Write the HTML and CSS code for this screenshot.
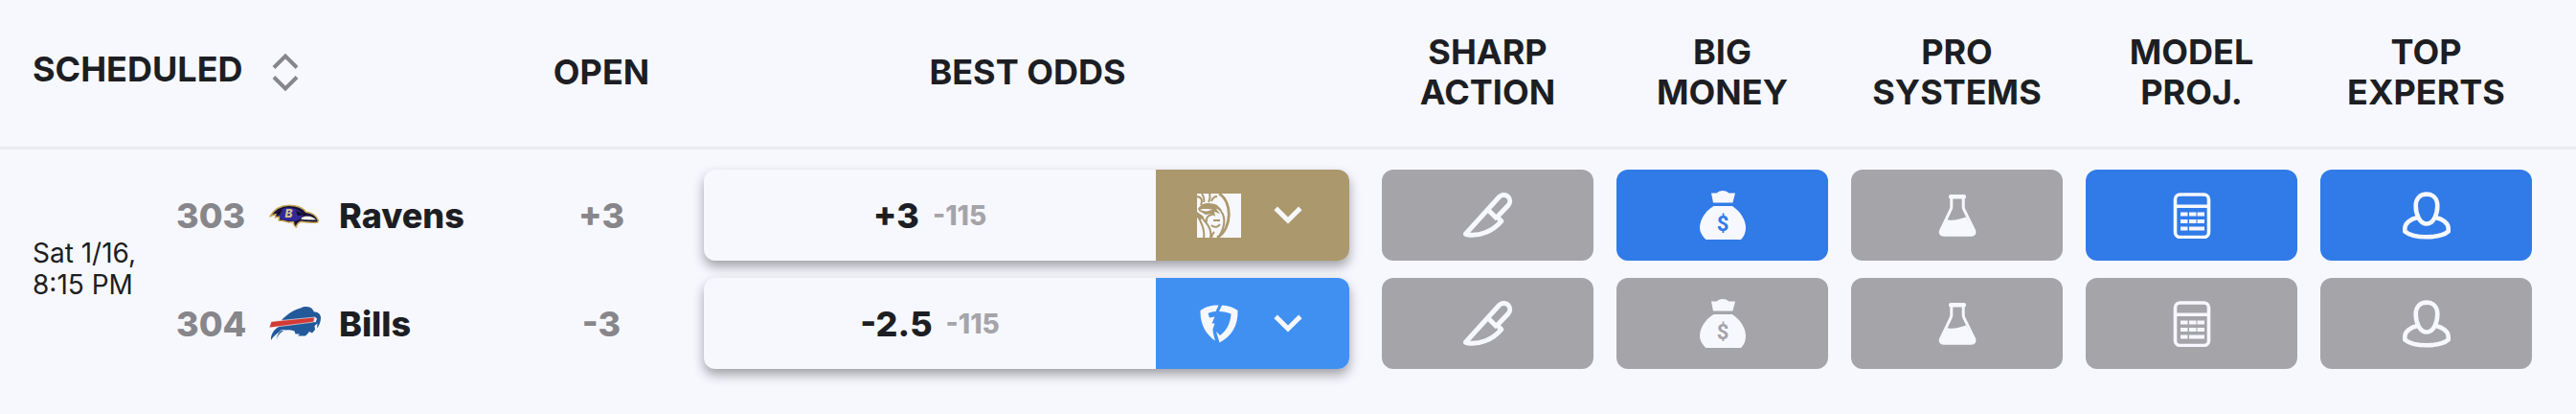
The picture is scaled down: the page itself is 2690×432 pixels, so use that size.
FILE: index.html
```html
<!DOCTYPE html>
<html lang="en">
<head>
    <meta charset="UTF-8">
    <meta name="viewport" content="width=device-width, initial-scale=1.0">
    <title>NFL Odds</title>
    <link rel="stylesheet" href="styles.css">
</head>
<body>
    <!-- icons shared by both rows -->
    <svg class="icon-defs" aria-hidden="true">
        <symbol id="icon-chevron" viewBox="0 0 30 20">
            <path d="M2.2 2.4 15 15l12.8-12.6" fill="none" stroke="currentColor" stroke-width="5"/>
        </symbol>
        <symbol id="icon-knife" viewBox="0 0 54 48">
            <g fill="none" stroke="currentColor" stroke-width="5" stroke-linejoin="round">
                <path d="M4 42.500 38.500 4.500c3-3 7-2.500 9.300-.2 2.500 2.500 2.600 6.400 0 9.200L36.500 25.200l4.200 4.600C32 40 18 46 5 43.800c-1.500-.3-2-.6-1-1.300z"/>
                <path d="M26.500 17.500 36.500 27.500"/>
            </g>
        </symbol>
        <symbol id="icon-money" viewBox="0 0 50 52">
            <path d="M13 2.500h5.500c4-3.300 9-3.300 13 0H38l-2.600 10H15z" fill="currentColor"/>
            <path d="M15.500 16h19.500C44 22 49 31 49 38.500c0 5-1.500 9-5 12.500H7.500C3.500 47.500 1 43 1 38.500 1 31 6.500 21 15.500 16z" fill="currentColor"/>
        </symbol>
        <symbol id="icon-flask" viewBox="0 0 40 46">
            <rect x="11" y="1" width="18" height="4.500" rx="2" fill="currentColor"/>
            <path d="M13.800 4v9.500c0 1-.2 2-.6 3L2.600 38.500c-1 3 .4 4.700 3 4.700h29c2.600 0 4-1.700 3-4.700L26.800 16.500c-.4-1-.6-2-.6-3V4" fill="none" stroke="currentColor" stroke-width="3"/>
            <path d="M9.500 27c6 2.300 12-.5 19.500-2.500l8.500 15c.3 2.500-.5 4-3 4H5c-2.500 0-3.200-2-2.500-4z" fill="currentColor"/>
        </symbol>
        <symbol id="icon-calc" viewBox="0 0 40 48">
            <rect x="2.500" y="2" width="35" height="44.500" rx="5" fill="none" stroke="currentColor" stroke-width="3.600"/>
            <path d="M3 14.300h34" stroke="currentColor" stroke-width="3.400"/>
            <path d="M8 22.500h7.500M17 22.500h7.500M25.500 22.500h7.500M8 30h7.500M17 30h7.500M25.500 30h7.500M8 37.500h7.500M17 37.500h16" stroke="currentColor" stroke-width="4"/>
        </symbol>
        <symbol id="icon-expert" viewBox="0 0 52 50">
            <g fill="none" stroke="currentColor" stroke-width="4.600" stroke-linejoin="round">
                <path d="M26 2.600c7 0 11.300 5 11.300 12.200C37.300 24 33 33.500 26 33.500S14.700 24 14.700 14.800C14.700 7.600 19 2.600 26 2.600z"/>
                <path d="M16.500 27C9 28.500 3.300 33 3.300 38.500v3C8 45.500 16 47.300 26 47.300s18-1.800 22.700-5.800v-3C48.700 33 43 28.500 35.500 27"/>
            </g>
        </symbol>
    </svg>

    <table class="odds-table">
        <colgroup>
            <col class="col-scheduled">
            <col class="col-open">
            <col class="col-best">
            <col class="col-signal" span="5">
            <col class="col-end">
        </colgroup>
        <thead>
            <tr>
                <th class="scheduled">
                    <button class="sort">
                        Scheduled
                        <svg width="28" height="42" viewBox="0 0 28 42" aria-hidden="true">
                            <path d="M2 16.500 14 4.500l12 12M2 26.500l12 12 12-12" fill="none" stroke="#87868b" stroke-width="4"/>
                        </svg>
                    </button>
                </th>
                <th>Open</th>
                <th>Best Odds</th>
                <th>Sharp<br>Action</th>
                <th>Big<br>Money</th>
                <th>Pro<br>Systems</th>
                <th>Model<br>Proj.</th>
                <th>Top<br>Experts</th>
                <td></td>
            </tr>
        </thead>
        <tbody>
            <tr>
                <td>
                    <div class="game">
                        <div class="game-time">Sat 1/16,<br>8:15 PM</div>
                        <div class="stack">
                            <div class="team">
                                <span class="team-number">303</span>
                                <svg class="team-logo" viewBox="0 0 56 36" role="img" aria-label="Baltimore Ravens">
                                    <path d="M2 18.700C6 12 12 7.500 22 7.300c8 0 14 2.200 17.500 7 6 .7 11 4 12.800 8.700-.1 1-.3 1.600-.8 2-6 .5-12 0-17-.7-2 .5-4.200 1.700-5.200 5.900-1.800-1.200-2.800-3-3-5.700l-4.800.5-6.500-1.700-4-.3 1-4-4.500 1 .5-3.500z" fill="#17123c" stroke="#c9aa54" stroke-width="1.500" stroke-linejoin="round"/>
                                    <path d="M10 15.500c4-6 11-7 18-4.500 4 1.500 7 3.500 9 6l-4 5-6 2-9-1-5-2z" fill="#33289a"/>
                                    <path d="M29 13l9 4-7 1zM9 15l6-4-3 6z" fill="#100d1d"/>
                                    <path d="M34.500 20c5-3 11.500-2.300 16.500 2.700-6 .3-11 .2-17-.7z" fill="#fff" stroke="#22202a" stroke-width=".8"/>
                                    <text x="17.500" y="20" class="ravens-letter">B</text>
                                </svg>
                                <span class="team-name">Ravens</span>
                            </div>
                            <div class="team">
                                <span class="team-number">304</span>
                                <svg class="team-logo" viewBox="0 0 56 36" role="img" aria-label="Buffalo Bills">
                                    <path d="M14 14C20 8 27 3 34 1.500c4-2 9-2 12 .8l2 3.200c4.500 0 7 2.500 7 6.500-.3 5-2 8-4 10.500l.5-5-3 2.500.5 4-3 3.500-3-1.500-2 2.500-2 2h-8l2-2h-4.500l-1-3C18 22 9 26 3 35c-.5-6 3-11 9-15z" fill="#22599a"/>
                                    <path d="M17.500 24.500C13 27 10 30 9 34.500c-.8-4 1.500-7.500 5-10z" fill="#22599a" stroke="#f7f8fe" stroke-width=".7"/>
                                    <path d="M3.300 15.500 48.500 11l-1 5L1 22z" fill="#d23a34" stroke="#f7f8fe" stroke-width=".6"/>
                                    <path d="M48.500 10.500l2.500 2-1.500 4-1.500-.5z" fill="#f7f8fe"/>
                                </svg>
                                <span class="team-name">Bills</span>
                            </div>
                        </div>
                    </div>
                </td>
                <td>
                    <div class="stack">
                        <div class="open">+3</div>
                        <div class="open">-3</div>
                    </div>
                </td>
                <td class="best">
                    <div class="stack">
                        <div class="odds">
                            <div class="line">+3 <span class="juice">-115</span></div>
                            <button class="book mgm" aria-label="BetMGM, choose book">
                                <svg width="46" height="46" viewBox="0 0 46 46" aria-hidden="true">
                                    <path d="M0 0h46v46H0z" fill="#f7f8fe"/>
                                    <g fill="none" stroke="#ab986c" stroke-width="2">
                                        <path d="M23 0C37 8 37 37 21 46" stroke-width="2.800"/>
                                        <path d="M0 3c5 1 6 4 4 9M5 0c2 3 3 6 2 9M13 0c1 3 1 5-1 9M21 3c-3 0-5 2-6 5"/>
                                        <path d="M1 22c1 7 8 12 6 24M5 24c3 7 11 10 9 22M10 30c-1-5 2-8 6-8M22 15c9 8 8 18 1 30M18 40c-2 2-3 3-3 6"/>
                                        <path d="M15 33c3 3 7 2 9-1M17 28h7"/>
                                    </g>
                                    <path d="M1 16c4-7 12-7 20-4l5 5-6-1 4 5-6-2 1 5-5-3-5 1-7-4zM0 19l7 5-4 4-3-3z" fill="#ab986c"/>
                                    <path d="M3 17c4-2 9 0 13-1-3 3-8 3-13 1z" fill="#f7f8fe"/>
                                </svg>
                                <svg class="chevron" aria-hidden="true"><use href="#icon-chevron"/></svg>
                            </button>
                        </div>
                        <div class="odds">
                            <div class="line">-2.5 <span class="juice">-115</span></div>
                            <button class="book fanduel" aria-label="FanDuel, choose book">
                                <svg width="46" height="46" viewBox="0 0 46 46" aria-hidden="true">
                                    <path d="M22.500 3.500 19.500 10c-4 .3-6 1-8 2l1.500 4.500 5.500-1-3 7h3l-2 6c0 3 .8 6 2.500 12C10 34.500 3 24 3.500 9 9 5 15 3.500 22.500 3.500z" fill="currentColor"/>
                                    <path d="M26 3.500c6 .2 12 2 16.500 5.500C43 25 36 36 23.500 42.500L20 31l4 4c7-5 11-13 11.500-22.500-3.500-1.500-7.500-2.500-12.500-2.500z" fill="currentColor"/>
                                </svg>
                                <svg class="chevron" aria-hidden="true"><use href="#icon-chevron"/></svg>
                            </button>
                        </div>
                    </div>
                </td>
                <td>
                    <div class="stack">
                        <button class="signal" aria-label="Ravens sharp action"><svg width="54" height="48"><use href="#icon-knife"/></svg></button>
                        <button class="signal" aria-label="Bills sharp action"><svg width="54" height="48"><use href="#icon-knife"/></svg></button>
                    </div>
                </td>
                <td>
                    <div class="stack">
                        <button class="signal active" aria-label="Ravens big money">
                            <svg width="50" height="52"><use href="#icon-money"/><text x="25" y="42" class="money-sign">$</text></svg>
                        </button>
                        <button class="signal" aria-label="Bills big money">
                            <svg width="50" height="52"><use href="#icon-money"/><text x="25" y="42" class="money-sign">$</text></svg>
                        </button>
                    </div>
                </td>
                <td>
                    <div class="stack">
                        <button class="signal" aria-label="Ravens pro systems"><svg width="40" height="46"><use href="#icon-flask"/></svg></button>
                        <button class="signal" aria-label="Bills pro systems"><svg width="40" height="46"><use href="#icon-flask"/></svg></button>
                    </div>
                </td>
                <td>
                    <div class="stack">
                        <button class="signal active" aria-label="Ravens model projection"><svg width="40" height="48"><use href="#icon-calc"/></svg></button>
                        <button class="signal" aria-label="Bills model projection"><svg width="40" height="48"><use href="#icon-calc"/></svg></button>
                    </div>
                </td>
                <td>
                    <div class="stack">
                        <button class="signal active" aria-label="Ravens top experts"><svg width="52" height="50"><use href="#icon-expert"/></svg></button>
                        <button class="signal" aria-label="Bills top experts"><svg width="52" height="50"><use href="#icon-expert"/></svg></button>
                    </div>
                </td>
                <td></td>
            </tr>
        </tbody>
    </table>
</body>
</html>
```

FILE: styles.css
```css
body {
    margin: 0;
    font-family: Inter, "Liberation Sans", sans-serif;
    color: #1d1e23;
    background-color: #f7f8fe;
}

button {
    padding: 0;
    border: none;
    font: inherit;
    color: inherit;
    background: none;
    cursor: pointer;
}

svg {
    display: block;
}

.icon-defs {
    position: absolute;
    width: 0;
    height: 0;
}

.odds-table {
    width: 100%;
    table-layout: fixed;
    border-spacing: 0;
}

.col-scheduled {
    width: 541px;
}

.col-open {
    width: 174px;
}

.col-signal {
    width: 245px;
}

.col-end {
    width: 34px;
}

/* header */
thead th,
thead td {
    height: 150px;
    padding: 0 0 3px;
    border-bottom: 3px solid #ebecf1;
    font-size: 36px;
    font-weight: 700;
    line-height: 42px;
    text-align: center;
    text-transform: uppercase;
}

thead .scheduled {
    padding-left: 34px;
    text-align: left;
}

.sort {
    display: flex;
    align-items: flex-start;
    gap: 30px;
    line-height: 36px;
    text-transform: uppercase;
}

/* body */
tbody td {
    padding: 21px 12px 46px;
}

tbody td:first-child {
    padding-left: 34px;
}

tbody .best {
    padding-left: 20px;
    padding-right: 22px;
}

.stack {
    display: flex;
    flex-direction: column;
    gap: 18px;
}

.game {
    display: flex;
    align-items: center;
}

.game-time {
    width: 150px;
    font-size: 28px;
    line-height: 33px;
}

.team,
.open,
.odds,
.signal {
    display: flex;
    align-items: center;
    height: 95px;
}

.team,
.open,
.line {
    font-size: 36px;
    font-weight: 800;
}

.team-number {
    width: 96px;
    color: #87868b;
}

.team-logo {
    width: 56px;
    height: 36px;
    margin-right: 18px;
}

.ravens-letter {
    font-size: 12px;
    font-style: italic;
    font-weight: 800;
    fill: #d9c48a;
}

.open {
    justify-content: center;
    color: #87868b;
}

.odds {
    border-radius: 12px;
    background-color: #f7f8fe;
    box-shadow: 0 6px 12px rgba(29, 30, 35, 0.4);
}

.line {
    display: flex;
    flex: 1;
    align-items: center;
    justify-content: center;
    gap: 14px;
}

.juice {
    font-size: 28px;
    color: #a5a4a9;
}

.book {
    display: flex;
    align-items: center;
    gap: 34px;
    box-sizing: border-box;
    width: 202px;
    height: 100%;
    padding-left: 43px;
    border-radius: 0 12px 12px 0;
    color: #f7f8fe;
}

.mgm {
    background-color: #ab986c;
}

.fanduel {
    background-color: #4090f2;
}

.chevron {
    width: 30px;
    height: 20px;
}

.signal {
    justify-content: center;
    width: 100%;
    border-radius: 12px;
    color: #f7f8fe;
    background-color: #a5a4a9;
}

.signal.active {
    background-color: #307be8;
}

.money-sign {
    font-family: Roboto, sans-serif;
    font-size: 22px;
    font-weight: 700;
    text-anchor: middle;
    fill: #a5a4a9;
}

.active .money-sign {
    fill: #307be8;
}
```
